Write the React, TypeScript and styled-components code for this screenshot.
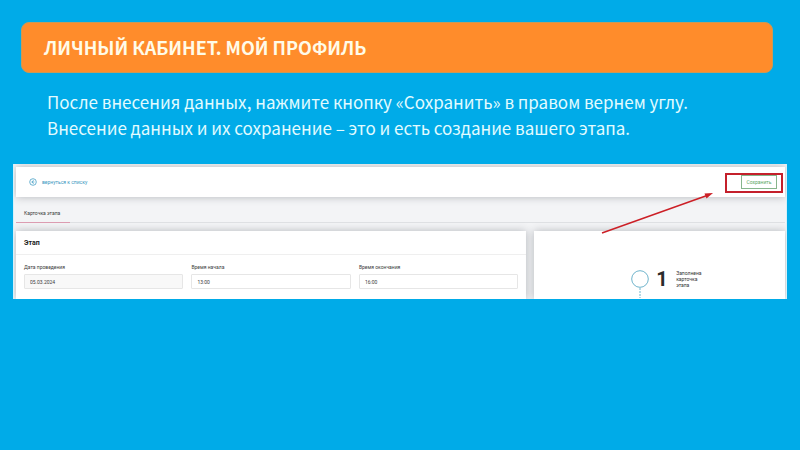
import React from "react";
import styled, { createGlobalStyle } from "styled-components";

const GlobalStyle = createGlobalStyle`
  * { box-sizing: border-box; }
  body { margin: 0; background: #00abe8; }
  h1, h2, p { margin: 0; }
`;

const Slide = styled.main`
  min-height: 100vh;
  padding: 22px 13px;
  background: #00abe8;
  font-family: "Noto Sans CJK SC", "Noto Sans", sans-serif;
`;

const Banner = styled.header`
  display: flex;
  align-items: center;
  height: 51px;
  margin: 0 14px 0 8px;
  padding: 0 22px 2px;
  border: 1px solid #c89a58;
  border-radius: 8px;
  background: #ff8c2b;
`;

const Title = styled.h1`
  font-size: 18px;
  line-height: 26px;
  font-weight: 700;
  color: #fffbe8;
`;

const Lead = styled.p`
  margin: 16px 34px 23px;
  font-size: 17px;
  line-height: 26px;
  color: #e2fbff;
`;

const Screen = styled.section`
  position: relative;
  overflow: hidden;
  padding: 3px 1px 0 2px;
  border: 1px solid #d5f1fa;
  border-width: 0 1px;
  background: #f3f4f6;
  font-family: Roboto, sans-serif;
  font-size: 5px;
  line-height: 6px;
  color: #3c3c3c;
`;

const Card = styled.div`
  background: #fff;
  box-shadow: 0 0 8px rgba(50, 55, 65, 0.32);
`;

const Toolbar = styled(Card)`
  display: flex;
  align-items: center;
  justify-content: space-between;
  height: 30px;
  padding: 0 8px 0 13px;
`;

const BackLink = styled.a`
  display: flex;
  align-items: center;
  gap: 5px;
  color: #3b97c0;
  text-decoration: none;
`;

const SaveButton = styled.button`
  width: 36px;
  height: 14px;
  padding: 0;
  border: 1px solid #86b58c;
  background: #fff;
  font: inherit;
  color: #5da865;
`;

const Tabs = styled.nav`
  display: flex;
  align-items: flex-end;
  height: 26px;
  border-bottom: 1px solid #dfe1e4;
`;

const Tab = styled.a`
  margin-bottom: -1px;
  padding: 0 10px 6px 8px;
  border-bottom: 1px solid #dd9db2;
  color: #3c3c3c;
  text-decoration: none;
`;

const Columns = styled.div`
  display: grid;
  grid-template-columns: 511fr 251fr;
  gap: 8px;
  padding-top: 8px;
`;

const CardTitle = styled.h2`
  padding: 8px 8px 7px;
  border-bottom: 1px solid #efefef;
  font-size: 7px;
  line-height: 8px;
  font-weight: 700;
  color: #222;
`;

const Fields = styled.div`
  display: grid;
  grid-template-columns: repeat(3, 1fr);
  gap: 8px;
  padding: 9px 8px 10px;
`;

const Field = styled.label`
  display: grid;
  gap: 4px;
`;

const Input = styled.input<{ $muted?: boolean }>`
  width: 100%;
  height: 15px;
  padding: 0 5px;
  border: 1px solid #e6e6e6;
  border-radius: 1px;
  outline: none;
  background: ${(p) => (p.$muted ? "#f8f8f8" : "#fff")};
  font: inherit;
  color: #3c3c3c;
`;

const Progress = styled(Card)`
  display: flex;
  justify-content: center;
  padding-top: 39px;
  padding-left: 18px;
`;

const Step = styled.div`
  display: grid;
  grid-template-columns: 18px 11px 32px;
  gap: 7px;
  height: 28px;
`;

const StepNumber = styled.span`
  font-size: 20px;
  line-height: 18px;
  font-weight: 700;
  color: #2b2b2b;
`;

const StepText = styled.p`
  margin-left: 2px;
  color: #333;
`;

const Highlight = styled.div`
  position: absolute;
  top: 9px;
  right: 3px;
  width: 58px;
  height: 20px;
  border: 2px solid #c4202b;
  pointer-events: none;
`;

const Arrow = styled.svg`
  position: absolute;
  top: 27px;
  right: 72px;
  pointer-events: none;
`;

const fields = [
  { label: "Дата проведения", value: "05.03.2024", muted: true },
  { label: "Время начала", value: "13:00" },
  { label: "Время окончания", value: "16:00" },
];

export default function App() {
  return (
    <>
      <GlobalStyle />
      <Slide>
        <Banner>
          <Title>ЛИЧНЫЙ КАБИНЕТ. МОЙ ПРОФИЛЬ</Title>
        </Banner>
        <Lead>
          После внесения данных, нажмите кнопку «Сохранить» в правом вернем углу.
          <br />
          Внесение данных и их сохранение – это и есть создание вашего этапа.
        </Lead>
        <Screen>
          <Toolbar>
            <BackLink href="#list">
              <svg width="8" height="8" viewBox="0 0 8 8" fill="none" stroke="#2f93bf" aria-hidden="true">
                <circle cx="4" cy="4" r="3.3" strokeWidth=".7" />
                <path d="M4.6 2.2 2.8 4l1.8 1.8M2.8 4h2.6" strokeWidth=".7" />
              </svg>
              вернуться к списку
            </BackLink>
            <SaveButton type="button">Сохранить</SaveButton>
          </Toolbar>
          <Tabs>
            <Tab href="#card">Карточка этапа</Tab>
          </Tabs>
          <Columns>
            <Card>
              <CardTitle>Этап</CardTitle>
              <Fields>
                {fields.map((f) => (
                  <Field key={f.label}>
                    {f.label}
                    <Input type="text" defaultValue={f.value} $muted={f.muted} />
                  </Field>
                ))}
              </Fields>
            </Card>
            <Progress>
              <Step>
                <svg width="18" height="28" viewBox="0 0 18 28" fill="none" stroke="#6fb4cc" aria-hidden="true">
                  <circle cx="9" cy="9" r="8.3" />
                  <path d="M9 18v10" strokeDasharray="2 1" />
                </svg>
                <StepNumber>1</StepNumber>
                <StepText>
                  Заполнена
                  <br />
                  карточка
                  <br />
                  этапа
                </StepText>
              </Step>
            </Progress>
          </Columns>
          <Highlight />
          <Arrow width="114" height="44" viewBox="0 0 114 44" aria-hidden="true">
            <path d="M2 42 107 4.500" stroke="#cc1f26" strokeWidth="1.400" />
            <path d="M113 2 104.500 2.600 106.500 7.500Z" fill="#cc1f26" />
          </Arrow>
        </Screen>
      </Slide>
    </>
  );
}
